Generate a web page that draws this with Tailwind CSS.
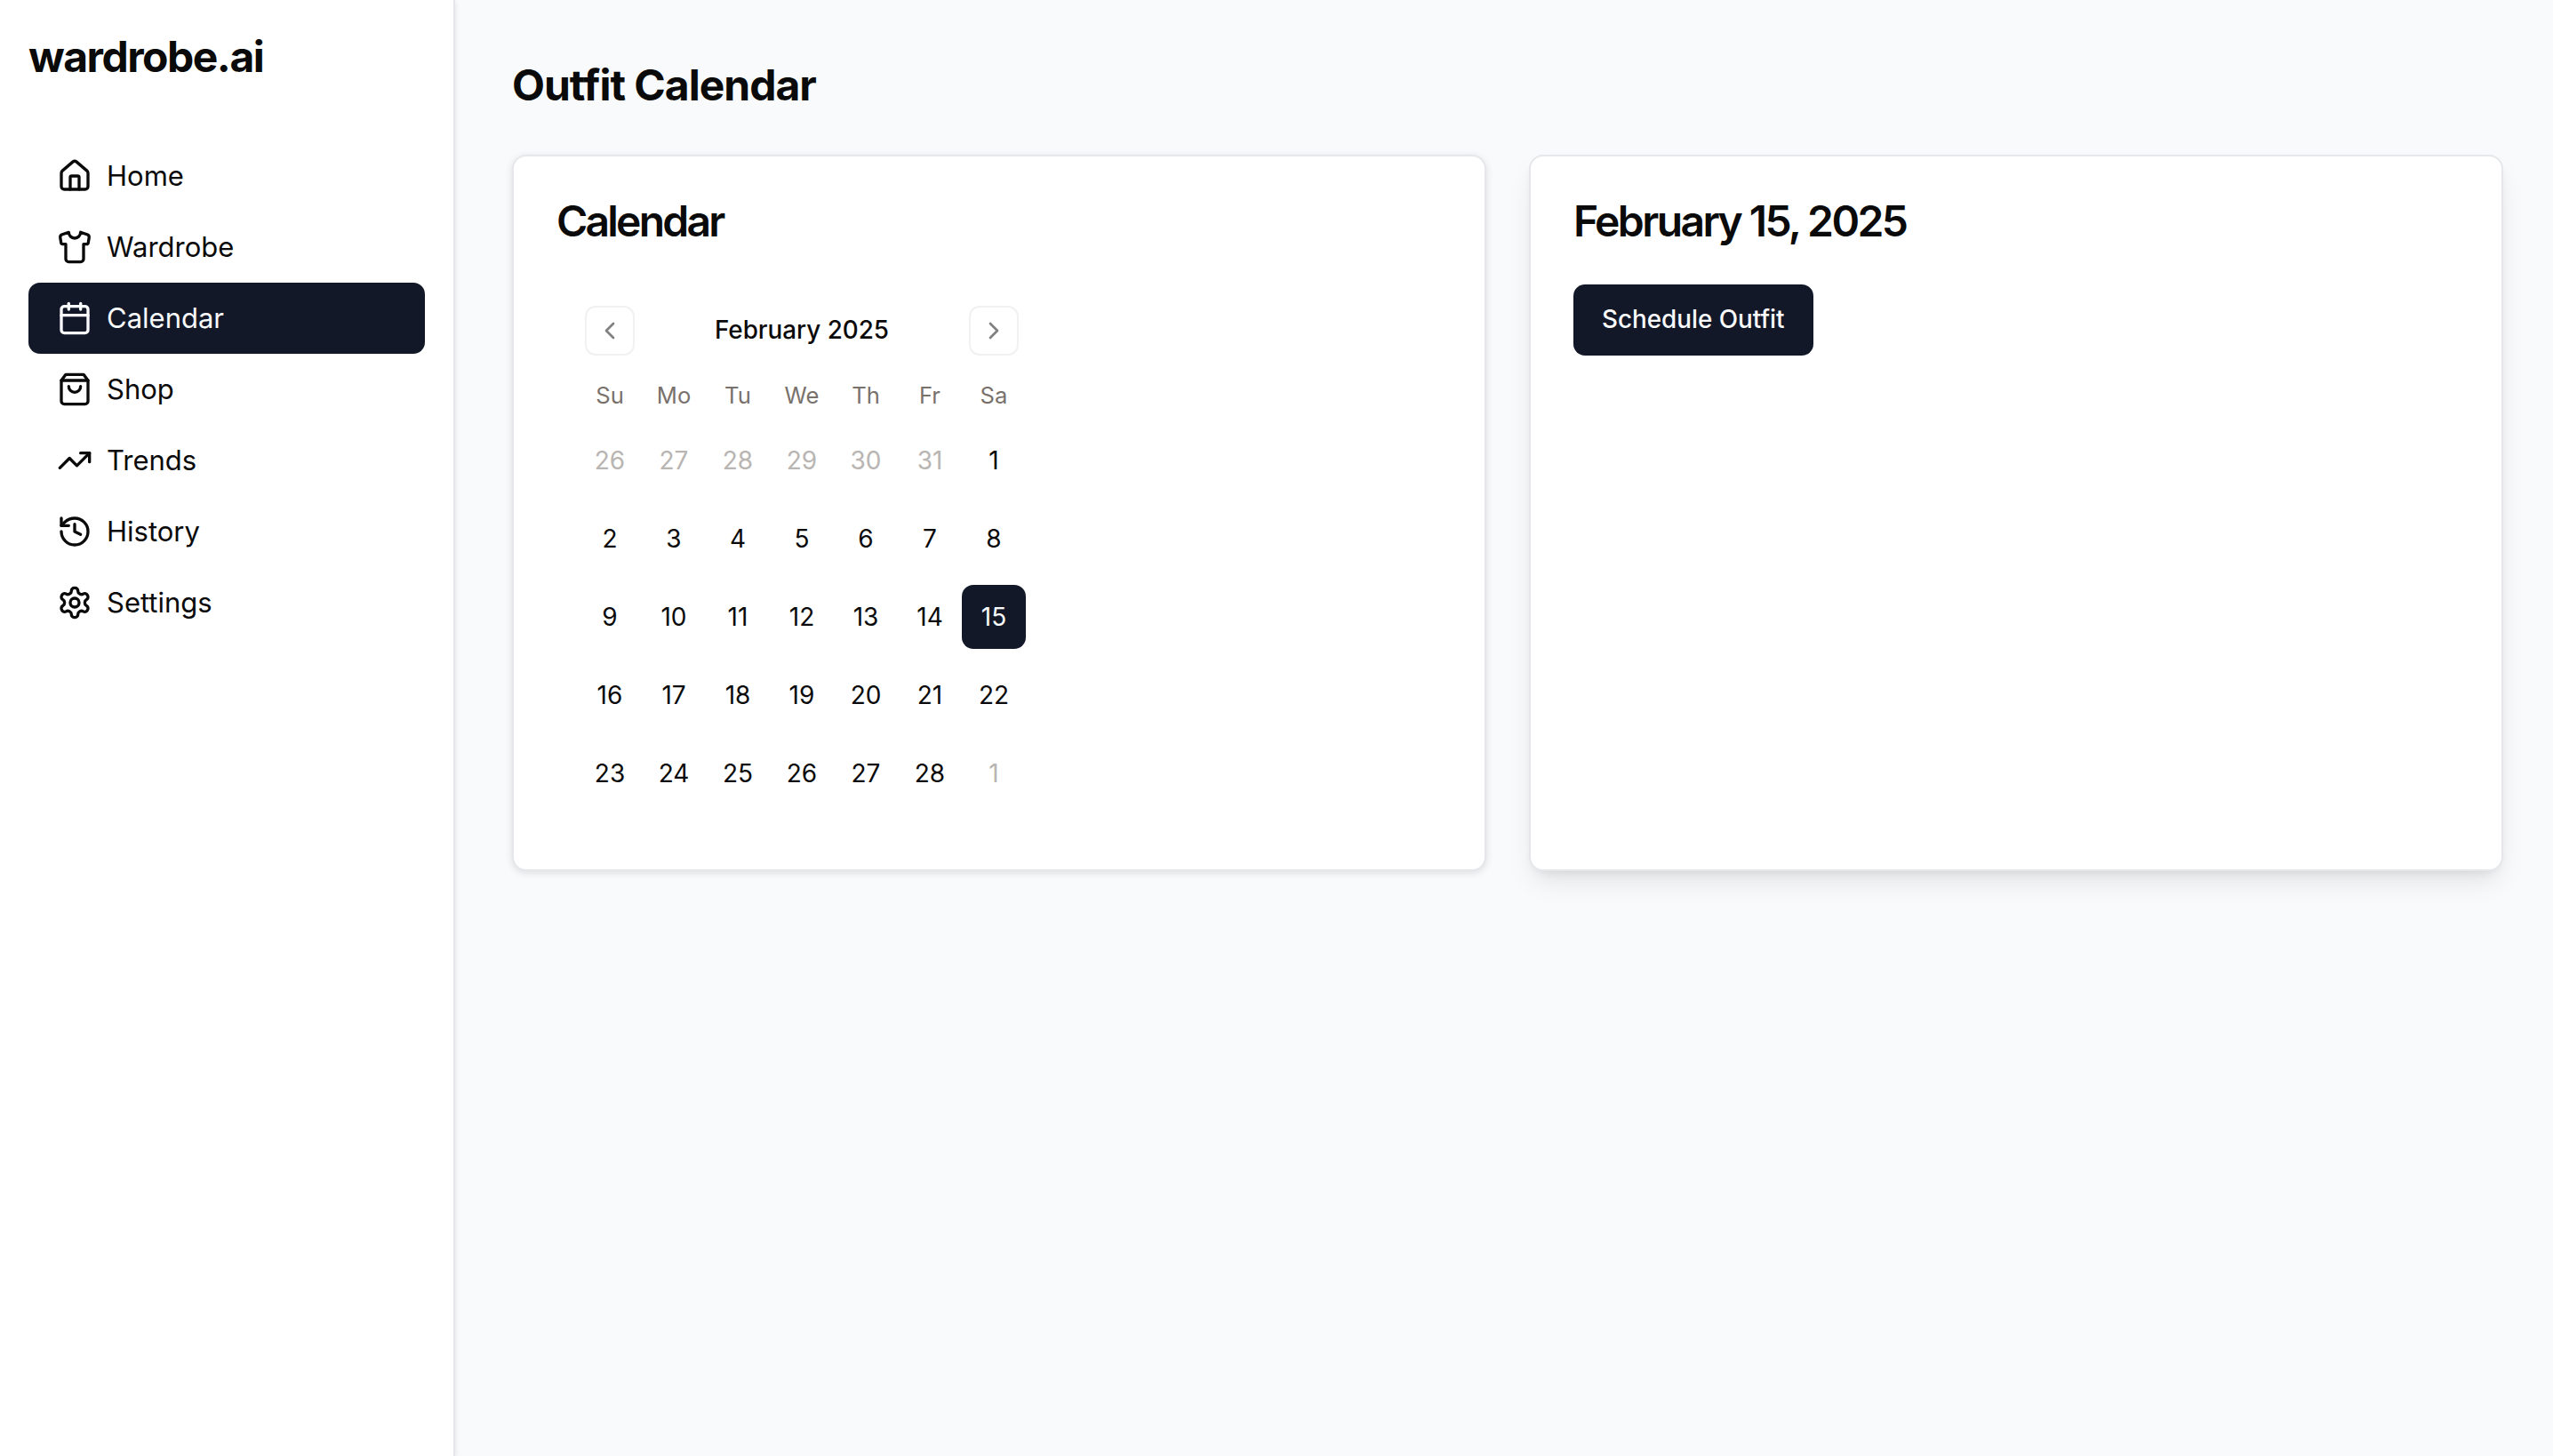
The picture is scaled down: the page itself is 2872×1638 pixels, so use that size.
<!DOCTYPE html>
<html lang="en">
<head>
<meta charset="utf-8">
<title>Outfit Calendar</title>
<script src="https://cdn.jsdelivr.net/npm/@tailwindcss/browser@4"></script>
</head>
<body class="bg-[#f9fafb] font-['Inter',sans-serif] text-[#0a0a0a]">
<div class="flex h-[1638px] w-[2872px] overflow-hidden">
  <aside class="w-[512px] shrink-0 bg-white border-r-[2px] border-[#e5e7eb] shadow-[0_2px_6px_rgba(0,0,0,0.1)] p-[32px] flex flex-col">
    <h1 class="text-[48px] leading-[64px] font-bold tracking-[-1.5px] mb-[62px]">wardrobe.ai</h1>
    <nav class="flex flex-col text-[31px]">
      <a class="flex items-center gap-[16px] h-[80px] px-[32px] rounded-[13px]">
        <svg class="w-[40px] h-[40px]" viewBox="0 0 24 24" fill="none" stroke="currentColor" stroke-width="2" stroke-linecap="round" stroke-linejoin="round"><path d="M15 21v-8a1 1 0 0 0-1-1h-4a1 1 0 0 0-1 1v8"/><path d="M3 10a2 2 0 0 1 .709-1.528l7-5.999a2 2 0 0 1 2.582 0l7 5.999A2 2 0 0 1 21 10v9a2 2 0 0 1-2 2H5a2 2 0 0 1-2-2z"/></svg>
        Home</a>
      <a class="flex items-center gap-[16px] h-[80px] px-[32px] rounded-[13px]">
        <svg class="w-[40px] h-[40px]" viewBox="0 0 24 24" fill="none" stroke="currentColor" stroke-width="2" stroke-linecap="round" stroke-linejoin="round"><path d="M20.38 3.46 16 2a4 4 0 0 1-8 0L3.62 3.46a2 2 0 0 0-1.34 2.23l.58 3.47a1 1 0 0 0 .99.84H6v10c0 1.1.9 2 2 2h8a2 2 0 0 0 2-2V10h2.15a1 1 0 0 0 .99-.84l.58-3.47a2 2 0 0 0-1.34-2.23z"/></svg>
        Wardrobe</a>
      <a class="flex items-center gap-[16px] h-[80px] px-[32px] rounded-[13px] bg-[#131829] text-[#f9fafb]">
        <svg class="w-[40px] h-[40px]" viewBox="0 0 24 24" fill="none" stroke="currentColor" stroke-width="2" stroke-linecap="round" stroke-linejoin="round"><path d="M8 2v4"/><path d="M16 2v4"/><rect width="18" height="18" x="3" y="4" rx="2"/><path d="M3 10h18"/></svg>
        Calendar</a>
      <a class="flex items-center gap-[16px] h-[80px] px-[32px] rounded-[13px]">
        <svg class="w-[40px] h-[40px]" viewBox="0 0 24 24" fill="none" stroke="currentColor" stroke-width="2" stroke-linecap="round" stroke-linejoin="round"><path d="M6 2 3 6v14a2 2 0 0 0 2 2h14a2 2 0 0 0 2-2V6l-3-4Z"/><path d="M3 6h18"/><path d="M16 10a4 4 0 0 1-8 0"/></svg>
        Shop</a>
      <a class="flex items-center gap-[16px] h-[80px] px-[32px] rounded-[13px]">
        <svg class="w-[40px] h-[40px]" viewBox="0 0 24 24" fill="none" stroke="currentColor" stroke-width="2" stroke-linecap="round" stroke-linejoin="round"><polyline points="22 7 13.5 15.5 8.5 10.5 2 17"/><polyline points="16 7 22 7 22 13"/></svg>
        Trends</a>
      <a class="flex items-center gap-[16px] h-[80px] px-[32px] rounded-[13px]">
        <svg class="w-[40px] h-[40px]" viewBox="0 0 24 24" fill="none" stroke="currentColor" stroke-width="2" stroke-linecap="round" stroke-linejoin="round"><path d="M3 12a9 9 0 1 0 9-9 9.75 9.75 0 0 0-6.74 2.74L3 8"/><path d="M3 3v5h5"/><path d="M12 7v5l4 2"/></svg>
        History</a>
      <a class="flex items-center gap-[16px] h-[80px] px-[32px] rounded-[13px]">
        <svg class="w-[40px] h-[40px]" viewBox="0 0 24 24" fill="none" stroke="currentColor" stroke-width="2" stroke-linecap="round" stroke-linejoin="round"><path d="M12.22 2h-.44a2 2 0 0 0-2 2v.18a2 2 0 0 1-1 1.73l-.43.25a2 2 0 0 1-2 0l-.15-.08a2 2 0 0 0-2.73.73l-.22.38a2 2 0 0 0 .73 2.73l.15.1a2 2 0 0 1 1 1.72v.51a2 2 0 0 1-1 1.74l-.15.09a2 2 0 0 0-.73 2.73l.22.38a2 2 0 0 0 2.73.73l.15-.08a2 2 0 0 1 2 0l.43.25a2 2 0 0 1 1 1.73V20a2 2 0 0 0 2 2h.44a2 2 0 0 0 2-2v-.18a2 2 0 0 1 1-1.73l.43-.25a2 2 0 0 1 2 0l.15.08a2 2 0 0 0 2.73-.73l.22-.39a2 2 0 0 0-.73-2.73l-.15-.08a2 2 0 0 1-1-1.74v-.5a2 2 0 0 1 1-1.74l.15-.09a2 2 0 0 0 .73-2.73l-.22-.38a2 2 0 0 0-2.73-.73l-.15.08a2 2 0 0 1-2 0l-.43-.25a2 2 0 0 1-1-1.73V4a2 2 0 0 0-2-2z"/><circle cx="12" cy="12" r="3"/></svg>
        Settings</a>
    </nav>
  </aside>
  <main class="flex-1 pl-[64px] pr-[56px] pt-[64px]">
    <h2 class="text-[48px] leading-[64px] font-bold mb-[46px] tracking-[-1px]">Outfit Calendar</h2>
    <div class="grid grid-cols-2 gap-[48px]">
      <section class="h-[806px] bg-white border-[2px] border-[#e5e7eb] rounded-[16px] shadow-[0_2px_8px_rgba(0,0,0,0.12)] p-[48px]">
        <h3 class="text-[48px] leading-[50px] font-semibold tracking-[-2.8px] mb-[70px]">Calendar</h3>
        <div class="w-[552px] px-[24px] text-[#0a0a0a]">
          <div class="flex items-center justify-between h-[56px] px-[8px]">
            <button class="w-[56px] h-[56px] flex items-center justify-center rounded-[12px] border-[2px] border-[#f1f1f0] text-[#808080]">
              <svg class="w-[32px] h-[32px]" viewBox="0 0 24 24" fill="none" stroke="currentColor" stroke-width="2" stroke-linecap="round" stroke-linejoin="round"><path d="m15 18-6-6 6-6"/></svg>
            </button>
            <span class="text-[27.8px] font-medium">February 2025</span>
            <button class="w-[56px] h-[56px] flex items-center justify-center rounded-[12px] border-[2px] border-[#f1f1f0] text-[#808080]">
              <svg class="w-[32px] h-[32px]" viewBox="0 0 24 24" fill="none" stroke="currentColor" stroke-width="2" stroke-linecap="round" stroke-linejoin="round"><path d="m9 18 6-6-6-6"/></svg>
            </button>
          </div>
          <div class="grid grid-cols-[repeat(7,72px)] auto-rows-[34px] mt-[28px] text-[25.6px] text-[#78716c] text-center items-center">
            <div>Su</div><div>Mo</div><div>Tu</div><div>We</div><div>Th</div><div>Fr</div><div>Sa</div>
          </div>
          <div class="grid grid-cols-[repeat(7,72px)] auto-rows-[72px] gap-y-[16px] mt-[20px] text-[28px] text-center">
            <div class="flex items-center justify-center text-[#b8b5b2]">26</div><div class="flex items-center justify-center text-[#b8b5b2]">27</div><div class="flex items-center justify-center text-[#b8b5b2]">28</div><div class="flex items-center justify-center text-[#b8b5b2]">29</div><div class="flex items-center justify-center text-[#b8b5b2]">30</div><div class="flex items-center justify-center text-[#b8b5b2]">31</div><div class="flex items-center justify-center">1</div>
            <div class="flex items-center justify-center">2</div><div class="flex items-center justify-center">3</div><div class="flex items-center justify-center">4</div><div class="flex items-center justify-center">5</div><div class="flex items-center justify-center">6</div><div class="flex items-center justify-center">7</div><div class="flex items-center justify-center">8</div>
            <div class="flex items-center justify-center">9</div><div class="flex items-center justify-center">10</div><div class="flex items-center justify-center">11</div><div class="flex items-center justify-center">12</div><div class="flex items-center justify-center">13</div><div class="flex items-center justify-center">14</div><div class="flex items-center justify-center rounded-[13px] bg-[#131829] text-[#f9fafb]">15</div>
            <div class="flex items-center justify-center">16</div><div class="flex items-center justify-center">17</div><div class="flex items-center justify-center">18</div><div class="flex items-center justify-center">19</div><div class="flex items-center justify-center">20</div><div class="flex items-center justify-center">21</div><div class="flex items-center justify-center">22</div>
            <div class="flex items-center justify-center">23</div><div class="flex items-center justify-center">24</div><div class="flex items-center justify-center">25</div><div class="flex items-center justify-center">26</div><div class="flex items-center justify-center">27</div><div class="flex items-center justify-center">28</div><div class="flex items-center justify-center text-[#b8b5b2]">1</div>
          </div>
        </div>
      </section>
      <section class="h-[806px] bg-white border-[2px] border-[#e5e7eb] rounded-[16px] shadow-[0_16px_30px_-6px_rgba(0,0,0,0.1),0_6px_12px_-6px_rgba(0,0,0,0.1)] p-[48px]">
        <h3 class="text-[48px] leading-[50px] font-semibold tracking-[-2.6px] mb-[46px]">February 15, 2025</h3>
        <button class="h-[80px] px-[32px] rounded-[13px] bg-[#131829] text-[#f9fafb] text-[27.8px] font-medium">Schedule Outfit</button>
      </section>
    </div>
  </main>
</div>
</body>
</html>
